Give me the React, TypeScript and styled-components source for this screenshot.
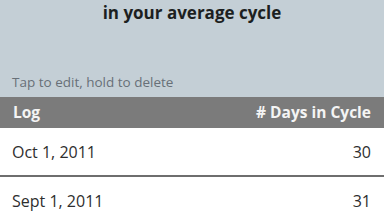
import React from 'react';
import styled, {createGlobalStyle} from "styled-components";


type CycleLogType = {
    date: string
    days: number
}

const logs: Array<CycleLogType> = [
    {date: "Oct 1, 2011", days: 30},
    {date: "Sept 1, 2011", days: 31},
]

export default function App() {
    return (
        <>
            <GlobalStyle/>
            <Screen>
                <Summary>
                    <SummaryTitle>in your average cycle</SummaryTitle>
                    <Hint>Tap to edit, hold to delete</Hint>
                </Summary>
                <TableHeader>
                    <HeaderCell>Log</HeaderCell>
                    <HeaderCell>&#35; Days in Cycle</HeaderCell>
                </TableHeader>
                <LogList>
                    {logs.map(log => (
                        <LogRow key={log.date}>
                            <span>{log.date}</span>
                            <span>{log.days}</span>
                        </LogRow>
                    ))}
                </LogList>
            </Screen>
        </>
    );
}

const GlobalStyle = createGlobalStyle`
    html, body {
        margin: 0;
        padding: 0;
        background: #ffffff;
    }

    body {
        font-family: "Open Sans", "DejaVu Sans", sans-serif;
    }
`

const Screen = styled.div`
    width: 384px;
    height: 216px;
    overflow: hidden;
    display: flex;
    flex-direction: column;
`

const Summary = styled.div`
    flex-shrink: 0;
    height: 97px;
    box-sizing: border-box;
    background: #c4cfd6;
    display: flex;
    flex-direction: column;
    justify-content: space-between;
    padding: 0 12px 6px;
`

const SummaryTitle = styled.h2`
    margin: 0;
    text-align: center;
    font-size: 17px;
    line-height: 26px;
    font-weight: 700;
    color: #1c1f21;
`

const Hint = styled.p`
    margin: 0;
    font-size: 13.5px;
    line-height: 18px;
    color: #687078;
`

const TableHeader = styled.div`
    flex-shrink: 0;
    height: 31px;
    box-sizing: border-box;
    background: #7b7b7b;
    display: flex;
    align-items: center;
    justify-content: space-between;
    padding: 0 13px 2px 13px;
`

const HeaderCell = styled.span`
    font-size: 15.5px;
    font-weight: 700;
    color: #f4f4f4;
`

const LogList = styled.ul`
    flex-shrink: 0;
    margin: 0;
    padding: 0;
    list-style: none;
`

const LogRow = styled.li`
    height: 47px;
    display: flex;
    align-items: center;
    justify-content: space-between;
    padding: 0 13px 0 12px;
    font-size: 16px;
    color: #2e2e2e;
    border-bottom: 2px solid #6e6e6e;
`
